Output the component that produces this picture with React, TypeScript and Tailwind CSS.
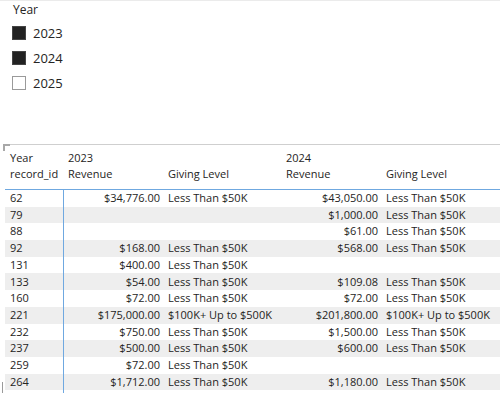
import React from "react";

type Row = {
  id: string;
  rev23?: string;
  lvl23?: string;
  rev24?: string;
  lvl24?: string;
};

const LOW = "Less Than $50K";
const MID = "$100K+ Up to $500K";

const rows: Row[] = [
  { id: "62", rev23: "$34,776.00", lvl23: LOW, rev24: "$43,050.00", lvl24: LOW },
  { id: "79", rev24: "$1,000.00", lvl24: LOW },
  { id: "88", rev24: "$61.00", lvl24: LOW },
  { id: "92", rev23: "$168.00", lvl23: LOW, rev24: "$568.00", lvl24: LOW },
  { id: "131", rev23: "$400.00", lvl23: LOW },
  { id: "133", rev23: "$54.00", lvl23: LOW, rev24: "$109.08", lvl24: LOW },
  { id: "160", rev23: "$72.00", lvl23: LOW, rev24: "$72.00", lvl24: LOW },
  { id: "221", rev23: "$175,000.00", lvl23: MID, rev24: "$201,800.00", lvl24: MID },
  { id: "232", rev23: "$750.00", lvl23: LOW, rev24: "$1,500.00", lvl24: LOW },
  { id: "237", rev23: "$500.00", lvl23: LOW, rev24: "$600.00", lvl24: LOW },
  { id: "259", rev23: "$72.00", lvl23: LOW },
  { id: "264", rev23: "$1,712.00", lvl23: LOW, rev24: "$1,180.00", lvl24: LOW },
];

const years = [
  { label: "2023", checked: true },
  { label: "2024", checked: true },
  { label: "2025", checked: false },
];

const cols = "grid grid-cols-[58px_100px_118px_100px_1fr]";

const App: React.FC = () => {
  return (
    <div className="relative h-[393px] w-[500px] overflow-hidden border-t border-[#ebebeb] bg-white font-['Open_Sans','Noto_Sans',sans-serif] text-[#252423]">
      {/* slicer */}
      <div className="h-[143px] pl-[12px] pt-[1px]">
        <div className="ml-px text-[12px] leading-[16px]">Year</div>
        <div className="mt-[2px]">
          {years.map((y) => (
            <div key={y.label} className="flex h-[25px] items-center gap-[7px]">
              <span
                className={
                  y.checked
                    ? "h-[14px] w-[14px] border border-[#444] bg-[#222]"
                    : "h-[14px] w-[14px] border border-[#9a9a9a] bg-white"
                }
              />
              <span className="text-[13px] leading-[16px]">{y.label}</span>
            </div>
          ))}
        </div>
      </div>

      {/* divider + corner */}
      <div className="relative ml-[3px] h-px bg-[#cfcfcf]">
        <div className="absolute left-0 top-0 h-[7px] w-[2px] bg-[#a8a8a8]" />
        <div className="absolute left-0 top-0 h-[2px] w-[7px] bg-[#a8a8a8]" />
      </div>

      {/* table */}
      <div className="ml-[5px] pt-[5px] text-[11px]">
        <div className="border-b border-[#6fa8e0] pb-[6px]">
          <div className={`${cols} h-[16px] items-center`}>
            <div className="pl-[5px]">Year</div>
            <div className="pl-[5px]">2023</div>
            <div />
            <div className="pl-[5px]">2024</div>
            <div />
          </div>
          <div className={`${cols} h-[17px] items-center`}>
            <div className="pl-[5px]">record_id</div>
            <div className="pl-[5px]">Revenue</div>
            <div className="pl-[5px]">Giving Level</div>
            <div className="pl-[5px]">Revenue</div>
            <div className="pl-[5px]">Giving Level</div>
          </div>
        </div>

        <div className="relative">
          <div className="absolute left-[58px] top-0 h-[220px] w-px bg-[#6fa8e0]" />
          {rows.map((r, i) => (
            <div
              key={r.id}
              className={`${cols} h-[16.7px] items-center whitespace-nowrap ${
                i % 2 === 1 ? "bg-[#eeeeee]" : "bg-white"
              }`}
            >
              <div className="pl-[5px]">{r.id}</div>
              <div className="pr-[3px] text-right">{r.rev23 ?? ""}</div>
              <div className="pl-[5px]">{r.lvl23 ?? ""}</div>
              <div className="pr-[3px] text-right">{r.rev24 ?? ""}</div>
              <div className="pl-[5px]">{r.lvl24 ?? ""}</div>
            </div>
          ))}
        </div>
      </div>

      <div className="absolute bottom-0 left-[2px] h-[11px] w-px bg-[#9a9a9a]" />
    </div>
  );
};

export default App;
